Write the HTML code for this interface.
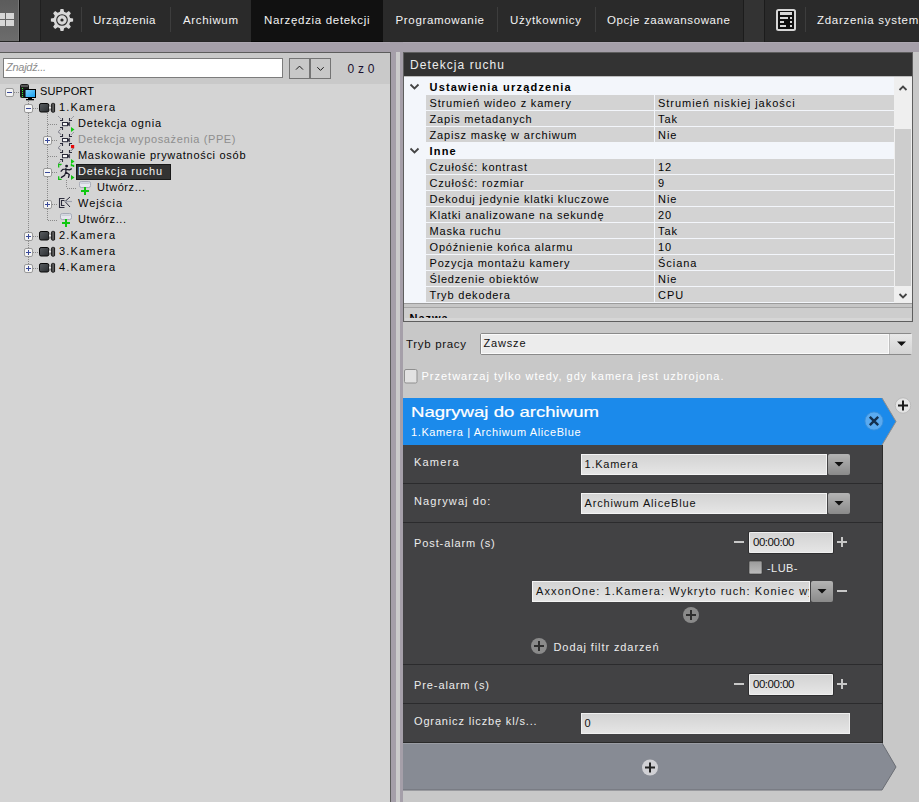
<!DOCTYPE html>
<html><head><meta charset="utf-8"><title>Detekcja ruchu</title>
<style>html,body{margin:0;padding:0;background:#c8c8c8;overflow:hidden}svg{display:block}text{font-family:"Liberation Sans", sans-serif}</style>
</head><body>
<svg width="919" height="802" viewBox="0 0 919 802" shape-rendering="auto">
<defs>
<linearGradient id="gWin" x1="0" y1="0" x2="0" y2="1"><stop offset="0" stop-color="#5c5c5c"/><stop offset="1" stop-color="#6c6c6c"/></linearGradient>
<linearGradient id="gCam" x1="0" y1="0" x2="1" y2="1"><stop offset="0" stop-color="#5a5e62"/><stop offset="1" stop-color="#2a2d30"/></linearGradient>
<linearGradient id="gNeck" x1="0" y1="0" x2="0" y2="1"><stop offset="0" stop-color="#888"/><stop offset="0.4" stop-color="#f0f0f0"/><stop offset="1" stop-color="#666"/></linearGradient>
<linearGradient id="gLens" x1="0" y1="0" x2="1" y2="0"><stop offset="0" stop-color="#222"/><stop offset="0.5" stop-color="#777"/><stop offset="1" stop-color="#111"/></linearGradient>
<linearGradient id="gScr" x1="0" y1="0" x2="1" y2="1"><stop offset="0" stop-color="#7fd4ff"/><stop offset="1" stop-color="#1aa0f0"/></linearGradient>
<linearGradient id="gField" x1="0" y1="0" x2="0" y2="1"><stop offset="0" stop-color="#d2d2d2"/><stop offset="1" stop-color="#e6e6e6"/></linearGradient>
<linearGradient id="gBtn" x1="0" y1="0" x2="0" y2="1"><stop offset="0" stop-color="#b4b4b4"/><stop offset="1" stop-color="#8a8a8a"/></linearGradient>
<linearGradient id="gBtnL" x1="0" y1="0" x2="0" y2="1"><stop offset="0" stop-color="#e8e8e8"/><stop offset="1" stop-color="#d4d4d4"/></linearGradient>
<linearGradient id="gChk" x1="0" y1="0" x2="0" y2="1"><stop offset="0" stop-color="#9a9a9a"/><stop offset="1" stop-color="#bcbcbc"/></linearGradient>
</defs>
<rect x="0" y="0" width="919" height="42" fill="#2a2a2a" />
<rect x="0" y="41" width="919" height="1" fill="#262626" />
<rect x="0" y="0" width="19" height="41" fill="url(#gWin)" />
<rect x="18" y="0" width="1" height="41" fill="#777" />
<rect x="19" y="0" width="1" height="42" fill="#0e0e0e" />
<rect x="20" y="0" width="20" height="41" fill="#333333" />
<rect x="40" y="0" width="1" height="41" fill="#1f1f1f" />
<rect x="0" y="13" width="5" height="6" fill="#d6d6d6" />
<rect x="6" y="13" width="8" height="6" fill="#d6d6d6" />
<rect x="0" y="20" width="5" height="6" fill="#d6d6d6" />
<rect x="6" y="20" width="8" height="6" fill="#d6d6d6" />
<polygon points="70.14,17.92 73.11,18.55 73.11,21.45 70.14,22.08 69.22,24.29 70.88,26.83 68.83,28.88 66.29,27.22 64.08,28.14 63.45,31.11 60.55,31.11 59.92,28.14 57.71,27.22 55.17,28.88 53.12,26.83 54.78,24.29 53.86,22.08 50.89,21.45 50.89,18.55 53.86,17.92 54.78,15.71 53.12,13.17 55.17,11.12 57.71,12.78 59.92,11.86 60.55,8.89 63.45,8.89 64.08,11.86 66.29,12.78 68.83,11.12 70.88,13.17 69.22,15.71" fill="#d8d8d8"/>
<circle cx="62" cy="20" r="5.3" fill="none" stroke="#2a2a2a" stroke-width="1.1"/>
<circle cx="62" cy="20" r="1.6" fill="#2a2a2a"/>
<rect x="81" y="7" width="1" height="25" fill="#3d3d3d" />
<rect x="170" y="7" width="1" height="25" fill="#3d3d3d" />
<rect x="497" y="7" width="1" height="25" fill="#3d3d3d" />
<rect x="595" y="7" width="1" height="25" fill="#3d3d3d" />
<rect x="805" y="7" width="1" height="25" fill="#3d3d3d" />
<rect x="251" y="0" width="132" height="42" fill="#111111" />
<rect x="251" y="41" width="132" height="1" fill="#070707" />
<rect x="743" y="0" width="1" height="42" fill="#1c1c1c" />
<rect x="744" y="0" width="20" height="42" fill="#333333" />
<rect x="764" y="0" width="1" height="42" fill="#1c1c1c" />
<text x="93" y="24" font-size="11.5" fill="#f2f2f2" textLength="62.5" lengthAdjust="spacing" >Urządzenia</text>
<text x="183" y="24" font-size="11.5" fill="#f2f2f2" textLength="55" lengthAdjust="spacing" >Archiwum</text>
<text x="264" y="24" font-size="11.5" fill="#f2f2f2" textLength="105.5" lengthAdjust="spacing" >Narzędzia detekcji</text>
<text x="395.5" y="24" font-size="11.5" fill="#f2f2f2" textLength="88.5" lengthAdjust="spacing" >Programowanie</text>
<text x="510" y="24" font-size="11.5" fill="#f2f2f2" textLength="71" lengthAdjust="spacing" >Użytkownicy</text>
<text x="607" y="24" font-size="11.5" fill="#f2f2f2" textLength="123" lengthAdjust="spacing" >Opcje zaawansowane</text>
<text x="817" y="24" font-size="11.5" fill="#f2f2f2" letter-spacing="0.7">Zdarzenia systemowe</text>
<rect x="777" y="10" width="18" height="20" rx="1.5" fill="#111" stroke="#d6d6d6" stroke-width="2"/>
<rect x="780" y="12" width="12" height="3" fill="#d8d8d8" />
<rect x="780" y="17" width="8" height="2" fill="#d8d8d8" />
<rect x="790" y="17" width="2" height="2" fill="#d8d8d8" />
<rect x="780" y="21" width="4" height="2" fill="#d8d8d8" />
<rect x="790" y="21" width="2" height="2" fill="#d8d8d8" />
<rect x="780" y="25" width="6" height="2" fill="#d8d8d8" />
<rect x="790" y="25" width="2" height="2" fill="#d8d8d8" />
<rect x="0" y="42" width="919" height="10" fill="#a59fa9" />
<rect x="0" y="42" width="919" height="1" fill="#ada7b1" />
<rect x="390" y="42" width="13" height="760" fill="#a59fa9" />
<rect x="396" y="52" width="4" height="750" fill="#cbcbcb" />
<rect x="0" y="52" width="390" height="750" fill="#d4d4d4" />
<rect x="0" y="52" width="391" height="1" fill="#5c5c5c" />
<rect x="390" y="52" width="1" height="750" fill="#5c5c5c" />
<rect x="0" y="53" width="390" height="31" fill="#c9c9c9" />
<rect x="3" y="58" width="280" height="20" fill="#7c7c7c" />
<rect x="4" y="59" width="278" height="18" fill="#ffffff" />
<text x="6" y="71" font-size="11" fill="#8c8c8c" textLength="40" lengthAdjust="spacing" font-style="italic" >Znajdź...</text>
<rect x="289" y="58" width="42" height="21" fill="#747474" />
<rect x="290" y="59" width="19" height="19" fill="#c8c8c8" />
<rect x="311" y="59" width="19" height="19" fill="#c8c8c8" />
<path d="M296 69.6 L299.5 66.1 L303 69.6" fill="none" stroke="#111" stroke-width="0.95"/>
<path d="M317.3 67.2 L320.5 70.4 L323.7 67.2" fill="none" stroke="#111" stroke-width="0.95"/>
<text x="347.5" y="73" font-size="12" fill="#1a1030" textLength="27" lengthAdjust="spacing" >0 z 0</text>
<line x1="28.5" y1="97" x2="28.5" y2="268" stroke="#8a8a8a" stroke-width="1" stroke-dasharray="1 1"/>
<line x1="47.5" y1="113" x2="47.5" y2="220" stroke="#8a8a8a" stroke-width="1" stroke-dasharray="1 1"/>
<line x1="66.5" y1="180" x2="66.5" y2="188" stroke="#8a8a8a" stroke-width="1" stroke-dasharray="1 1"/>
<line x1="14" y1="92.5" x2="20" y2="92.5" stroke="#8a8a8a" stroke-width="1" stroke-dasharray="1 1"/>
<line x1="33" y1="108.5" x2="39" y2="108.5" stroke="#8a8a8a" stroke-width="1" stroke-dasharray="1 1"/>
<line x1="33" y1="236.5" x2="39" y2="236.5" stroke="#8a8a8a" stroke-width="1" stroke-dasharray="1 1"/>
<line x1="33" y1="252.5" x2="39" y2="252.5" stroke="#8a8a8a" stroke-width="1" stroke-dasharray="1 1"/>
<line x1="33" y1="268.5" x2="39" y2="268.5" stroke="#8a8a8a" stroke-width="1" stroke-dasharray="1 1"/>
<line x1="48" y1="124.5" x2="57" y2="124.5" stroke="#8a8a8a" stroke-width="1" stroke-dasharray="1 1"/>
<line x1="48" y1="156.5" x2="57" y2="156.5" stroke="#8a8a8a" stroke-width="1" stroke-dasharray="1 1"/>
<line x1="48" y1="220.5" x2="57" y2="220.5" stroke="#8a8a8a" stroke-width="1" stroke-dasharray="1 1"/>
<line x1="52" y1="140.5" x2="57" y2="140.5" stroke="#8a8a8a" stroke-width="1" stroke-dasharray="1 1"/>
<line x1="52" y1="172.5" x2="57" y2="172.5" stroke="#8a8a8a" stroke-width="1" stroke-dasharray="1 1"/>
<line x1="52" y1="204.5" x2="57" y2="204.5" stroke="#8a8a8a" stroke-width="1" stroke-dasharray="1 1"/>
<line x1="67" y1="188.5" x2="76" y2="188.5" stroke="#8a8a8a" stroke-width="1" stroke-dasharray="1 1"/>
<rect x="5.5" y="88.5" width="8" height="8" rx="1.5" fill="#f4f4f4" stroke="#9a9a9a" stroke-width="1"/>
<rect x="7" y="92" width="5" height="1" fill="#3a4a9a"/>
<rect x="24.5" y="104.5" width="8" height="8" rx="1.5" fill="#f4f4f4" stroke="#9a9a9a" stroke-width="1"/>
<rect x="26" y="108" width="5" height="1" fill="#3a4a9a"/>
<rect x="43.5" y="136.5" width="8" height="8" rx="1.5" fill="#f4f4f4" stroke="#9a9a9a" stroke-width="1"/>
<rect x="45" y="140" width="5" height="1" fill="#3a4a9a"/>
<rect x="47" y="138" width="1" height="5" fill="#3a4a9a"/>
<rect x="43.5" y="168.5" width="8" height="8" rx="1.5" fill="#f4f4f4" stroke="#9a9a9a" stroke-width="1"/>
<rect x="45" y="172" width="5" height="1" fill="#3a4a9a"/>
<rect x="43.5" y="200.5" width="8" height="8" rx="1.5" fill="#f4f4f4" stroke="#9a9a9a" stroke-width="1"/>
<rect x="45" y="204" width="5" height="1" fill="#3a4a9a"/>
<rect x="47" y="202" width="1" height="5" fill="#3a4a9a"/>
<rect x="24.5" y="232.5" width="8" height="8" rx="1.5" fill="#f4f4f4" stroke="#9a9a9a" stroke-width="1"/>
<rect x="26" y="236" width="5" height="1" fill="#3a4a9a"/>
<rect x="28" y="234" width="1" height="5" fill="#3a4a9a"/>
<rect x="24.5" y="248.5" width="8" height="8" rx="1.5" fill="#f4f4f4" stroke="#9a9a9a" stroke-width="1"/>
<rect x="26" y="252" width="5" height="1" fill="#3a4a9a"/>
<rect x="28" y="250" width="1" height="5" fill="#3a4a9a"/>
<rect x="24.5" y="264.5" width="8" height="8" rx="1.5" fill="#f4f4f4" stroke="#9a9a9a" stroke-width="1"/>
<rect x="26" y="268" width="5" height="1" fill="#3a4a9a"/>
<rect x="28" y="266" width="1" height="5" fill="#3a4a9a"/>
<rect x="20" y="84" width="9" height="14" rx="2" fill="#1a1a1a"/>
<rect x="21" y="85" width="7" height="2" fill="#555" />
<rect x="22" y="88" width="1" height="1" fill="#30f030" />
<rect x="22" y="90" width="1" height="1" fill="#30f030" />
<rect x="22" y="92" width="1" height="1" fill="#30f030" />
<rect x="22" y="94" width="1" height="1" fill="#30f030" />
<rect x="22" y="96" width="1" height="1" fill="#30f030" />
<rect x="24.5" y="89" width="11.5" height="9" fill="#000"/>
<rect x="25.5" y="90" width="9.5" height="7" fill="url(#gScr)"/>
<rect x="28" y="98" width="4" height="1.2" fill="#000" />
<rect x="26" y="99" width="8" height="1.3" fill="#000" />
<rect x="39.5" y="103.5" width="9.3" height="8.5" rx="1.6" fill="url(#gCam)" stroke="#080808" stroke-width="1"/>
<rect x="49" y="105.7" width="2.8" height="4.6" fill="url(#gNeck)"/>
<rect x="51.6" y="103.4" width="3" height="8.8" rx="0.8" fill="url(#gLens)" stroke="#050505" stroke-width="0.8"/>
<path d="M58.5 116.5 L61 119 M73.5 116.5 L71 119" stroke="#4a4a5c" stroke-width="0.9" stroke-dasharray="1 0.8" fill="none"/>
<path d="M60 120.5 H62.5 V118  M72 120.5 H69.5 V118" stroke="#2c2c3c" stroke-width="1.1" fill="none"/>
<rect x="62.5" y="122.5" width="5" height="3.2" fill="#f6f6f6" stroke="#2c2c3c" stroke-width="1"/>
<path d="M67.5 123.7 L69.6 122 V126 L67.5 124.6 Z" fill="#2c2c3c" stroke="#2c2c3c" stroke-width="0.5"/>
<path d="M60 127.5 H62.5 V130" stroke="#2c2c3c" stroke-width="1.1" fill="none"/>
<path d="M61 128.8 L58.5 131.5 L61 134" stroke="#4a4a5c" stroke-width="0.9" stroke-dasharray="1 0.8" fill="none"/>
<path d="M71 127 L74.5 129.5 L71 132 Z" fill="#10c810"/>
<path d="M58.5 132.5 L61 135 M73.5 132.5 L71 135" stroke="#4a4a5c" stroke-width="0.9" stroke-dasharray="1 0.8" fill="none"/>
<path d="M60 136.5 H62.5 V134  M72 136.5 H69.5 V134" stroke="#2c2c3c" stroke-width="1.1" fill="none"/>
<rect x="62.5" y="138.5" width="5" height="3.2" fill="#f6f6f6" stroke="#2c2c3c" stroke-width="1"/>
<path d="M67.5 139.7 L69.6 138 V142 L67.5 140.6 Z" fill="#2c2c3c" stroke="#2c2c3c" stroke-width="0.5"/>
<path d="M60 143.5 H62.5 V146" stroke="#2c2c3c" stroke-width="1.1" fill="none"/>
<path d="M61 144.8 L58.5 147.5 L61 150" stroke="#4a4a5c" stroke-width="0.9" stroke-dasharray="1 0.8" fill="none"/>
<path d="M72 143.5 H69.5 V146" stroke="#2c2c3c" stroke-width="1.1" fill="none"/>
<rect x="71" y="145" width="3.2" height="3.2" fill="#e80808" />
<path d="M73 148.5 L71 150.5" stroke="#4a4a5c" stroke-width="0.9" stroke-dasharray="1 0.8"/>
<path d="M58.5 148.5 L61 151 M73.5 148.5 L71 151" stroke="#4a4a5c" stroke-width="0.9" stroke-dasharray="1 0.8" fill="none"/>
<path d="M60 152.5 H62.5 V150  M72 152.5 H69.5 V150" stroke="#2c2c3c" stroke-width="1.1" fill="none"/>
<rect x="62.5" y="154.5" width="5" height="3.2" fill="#f6f6f6" stroke="#2c2c3c" stroke-width="1"/>
<path d="M67.5 155.7 L69.6 154 V158 L67.5 156.6 Z" fill="#2c2c3c" stroke="#2c2c3c" stroke-width="0.5"/>
<path d="M60 159.5 H62.5 V162" stroke="#2c2c3c" stroke-width="1.1" fill="none"/>
<path d="M61 160.8 L58.5 163.5 L61 166" stroke="#4a4a5c" stroke-width="0.9" stroke-dasharray="1 0.8" fill="none"/>
<path d="M71 159 L74.5 161.5 L71 164 Z" fill="#10c810"/>
<path d="M71.5 164 V165.5 H73.5 V167" stroke="#10c810" stroke-width="1.4" fill="none"/>
<path d="M58.7 167.5 V164.4 H61.6" stroke="#10c010" stroke-width="1.3" fill="none"/>
<path d="M58.7 176.3 V179.3 H61.6" stroke="#10c010" stroke-width="1.3" fill="none"/>
<path d="M71 175 L74.5 177.5 L71 180 Z" fill="#10c010"/>
<circle cx="66.6" cy="166.1" r="1.45" fill="#1a1a28"/>
<path d="M65.9 168.4 L65.9 172.2 M65.6 169 L62.8 169.4 L61.1 171.2 M66.3 169.3 L69.5 169.9 L71.4 168.9 M65.8 172.2 L64.6 175.4 L61.4 177.4 M66.1 172.3 L69.3 174.5 L68.5 177.4" stroke="#1a1a28" stroke-width="1.25" fill="none" stroke-linecap="round" stroke-linejoin="round"/>
<rect x="79.5" y="181.5" width="11" height="6" rx="1.8" fill="#e6e8ee" stroke="#a6aab6" stroke-width="1"/>
<rect x="80.5" y="182.5" width="9" height="1.3" fill="#c4c8d2" />
<rect x="81" y="190" width="8" height="2" fill="#10c810" />
<rect x="84" y="187" width="2" height="8" fill="#10c810" />
<path d="M64.5 198.5 H59.5 V207.5 H64.5 M64.5 200.5 H61.5 V205.5 H64.5" stroke="#2c2c3c" stroke-width="1.1" fill="none"/>
<path d="M70 197 L65 201.5 L70 207" stroke="#2c2c3c" stroke-width="1" fill="none"/>
<path d="M65 201.5 H72" stroke="#a0a4b0" stroke-width="1.2"/>
<rect x="60.5" y="213.5" width="11" height="6" rx="1.8" fill="#e6e8ee" stroke="#a6aab6" stroke-width="1"/>
<rect x="61.5" y="214.5" width="9" height="1.3" fill="#c4c8d2" />
<rect x="62" y="222" width="8" height="2" fill="#10c810" />
<rect x="65" y="219" width="2" height="8" fill="#10c810" />
<rect x="39.5" y="231.5" width="9.3" height="8.5" rx="1.6" fill="url(#gCam)" stroke="#080808" stroke-width="1"/>
<rect x="49" y="233.7" width="2.8" height="4.6" fill="url(#gNeck)"/>
<rect x="51.6" y="231.4" width="3" height="8.8" rx="0.8" fill="url(#gLens)" stroke="#050505" stroke-width="0.8"/>
<rect x="39.5" y="247.5" width="9.3" height="8.5" rx="1.6" fill="url(#gCam)" stroke="#080808" stroke-width="1"/>
<rect x="49" y="249.7" width="2.8" height="4.6" fill="url(#gNeck)"/>
<rect x="51.6" y="247.4" width="3" height="8.8" rx="0.8" fill="url(#gLens)" stroke="#050505" stroke-width="0.8"/>
<rect x="39.5" y="263.5" width="9.3" height="8.5" rx="1.6" fill="url(#gCam)" stroke="#080808" stroke-width="1"/>
<rect x="49" y="265.7" width="2.8" height="4.6" fill="url(#gNeck)"/>
<rect x="51.6" y="263.4" width="3" height="8.8" rx="0.8" fill="url(#gLens)" stroke="#050505" stroke-width="0.8"/>
<text x="40" y="95" font-size="11" fill="#050505" textLength="54" lengthAdjust="spacing" >SUPPORT</text>
<text x="59" y="111" font-size="11" fill="#050505" textLength="56" lengthAdjust="spacing" >1.Kamera</text>
<text x="78" y="127" font-size="11" fill="#050505" textLength="83" lengthAdjust="spacing" >Detekcja ognia</text>
<text x="78" y="143" font-size="11" fill="#8e8e8e" textLength="157.5" lengthAdjust="spacing" >Detekcja wyposażenia (PPE)</text>
<text x="78" y="159" font-size="11" fill="#050505" textLength="167.5" lengthAdjust="spacing" >Maskowanie prywatności osób</text>
<rect x="76" y="164" width="95" height="16" fill="#333333" />
<rect x="76.5" y="164.5" width="94" height="15" fill="none" stroke="#000" stroke-width="1" stroke-dasharray="1 1"/>
<text x="78" y="175" font-size="11" fill="#f4f4f4" textLength="84" lengthAdjust="spacing" >Detekcja ruchu</text>
<text x="97" y="191" font-size="11" fill="#050505" textLength="48" lengthAdjust="spacing" >Utwórz...</text>
<text x="78" y="207" font-size="11" fill="#050505" textLength="44" lengthAdjust="spacing" >Wejścia</text>
<text x="78" y="223" font-size="11" fill="#050505" textLength="48" lengthAdjust="spacing" >Utwórz...</text>
<text x="59" y="239" font-size="11" fill="#050505" textLength="56" lengthAdjust="spacing" >2.Kamera</text>
<text x="59" y="255" font-size="11" fill="#050505" textLength="56" lengthAdjust="spacing" >3.Kamera</text>
<text x="59" y="271" font-size="11" fill="#050505" textLength="56" lengthAdjust="spacing" >4.Kamera</text>
<rect x="403" y="52" width="516" height="750" fill="#c8c8c8" />
<rect x="403" y="52" width="510" height="270" fill="#5e5e5e" />
<rect x="404" y="53" width="508" height="23" fill="#333333" />
<text x="410" y="69" font-size="12" fill="#ececec" textLength="94" lengthAdjust="spacing" >Detekcja ruchu</text>
<rect x="404" y="76" width="508" height="1" fill="#bdbdbd" />
<rect x="404" y="77" width="490" height="226" fill="#f3f6fb" />
<rect x="894" y="77" width="18" height="226" fill="#efefef" />
<rect x="895" y="129" width="16" height="157" fill="#cdcdcd" />
<path d="M899.5 90 L903 86.5 L906.5 90" stroke="#444" stroke-width="1.8" fill="none"/>
<path d="M899.5 294 L903 297.5 L906.5 294" stroke="#444" stroke-width="1.8" fill="none"/>
<path d="M410.5 84.5 L414.5 88.5 L418.5 84.5" stroke="#444" stroke-width="1.8" fill="none"/>
<text x="429.5" y="91" font-size="11" fill="#000" font-weight="bold" letter-spacing="1.19">Ustawienia urządzenia</text>
<rect x="426" y="95" width="228" height="15" fill="#d3d3d3" />
<rect x="655" y="95" width="239" height="15" fill="#d3d3d3" />
<text x="429.5" y="107" font-size="11" fill="#050505" letter-spacing="0.82">Strumień wideo z kamery</text>
<text x="658" y="107" font-size="11" fill="#050505" letter-spacing="0.97">Strumień niskiej jakości</text>
<rect x="426" y="111" width="228" height="15" fill="#d3d3d3" />
<rect x="655" y="111" width="239" height="15" fill="#d3d3d3" />
<text x="429.5" y="123" font-size="11" fill="#050505" letter-spacing="0.82">Zapis metadanych</text>
<text x="658" y="123" font-size="11" fill="#050505" letter-spacing="0.97">Tak</text>
<rect x="426" y="127" width="228" height="15" fill="#d3d3d3" />
<rect x="655" y="127" width="239" height="15" fill="#d3d3d3" />
<text x="429.5" y="139" font-size="11" fill="#050505" letter-spacing="0.82">Zapisz maskę w archiwum</text>
<text x="658" y="139" font-size="11" fill="#050505" letter-spacing="0.97">Nie</text>
<path d="M410.5 148.5 L414.5 152.5 L418.5 148.5" stroke="#444" stroke-width="1.8" fill="none"/>
<text x="429.5" y="155" font-size="11" fill="#000" font-weight="bold" letter-spacing="1.19">Inne</text>
<rect x="426" y="159" width="228" height="15" fill="#d3d3d3" />
<rect x="655" y="159" width="239" height="15" fill="#d3d3d3" />
<text x="429.5" y="171" font-size="11" fill="#050505" letter-spacing="0.82">Czułość: kontrast</text>
<text x="658" y="171" font-size="11" fill="#050505" letter-spacing="0.97">12</text>
<rect x="426" y="175" width="228" height="15" fill="#d3d3d3" />
<rect x="655" y="175" width="239" height="15" fill="#d3d3d3" />
<text x="429.5" y="187" font-size="11" fill="#050505" letter-spacing="0.82">Czułość: rozmiar</text>
<text x="658" y="187" font-size="11" fill="#050505" letter-spacing="0.97">9</text>
<rect x="426" y="191" width="228" height="15" fill="#d3d3d3" />
<rect x="655" y="191" width="239" height="15" fill="#d3d3d3" />
<text x="429.5" y="203" font-size="11" fill="#050505" letter-spacing="0.82">Dekoduj jedynie klatki kluczowe</text>
<text x="658" y="203" font-size="11" fill="#050505" letter-spacing="0.97">Nie</text>
<rect x="426" y="207" width="228" height="15" fill="#d3d3d3" />
<rect x="655" y="207" width="239" height="15" fill="#d3d3d3" />
<text x="429.5" y="219" font-size="11" fill="#050505" letter-spacing="0.82">Klatki analizowane na sekundę</text>
<text x="658" y="219" font-size="11" fill="#050505" letter-spacing="0.97">20</text>
<rect x="426" y="223" width="228" height="15" fill="#d3d3d3" />
<rect x="655" y="223" width="239" height="15" fill="#d3d3d3" />
<text x="429.5" y="235" font-size="11" fill="#050505" letter-spacing="0.82">Maska ruchu</text>
<text x="658" y="235" font-size="11" fill="#050505" letter-spacing="0.97">Tak</text>
<rect x="426" y="239" width="228" height="15" fill="#d3d3d3" />
<rect x="655" y="239" width="239" height="15" fill="#d3d3d3" />
<text x="429.5" y="251" font-size="11" fill="#050505" letter-spacing="0.82">Opóźnienie końca alarmu</text>
<text x="658" y="251" font-size="11" fill="#050505" letter-spacing="0.97">10</text>
<rect x="426" y="255" width="228" height="15" fill="#d3d3d3" />
<rect x="655" y="255" width="239" height="15" fill="#d3d3d3" />
<text x="429.5" y="267" font-size="11" fill="#050505" letter-spacing="0.82">Pozycja montażu kamery</text>
<text x="658" y="267" font-size="11" fill="#050505" letter-spacing="0.97">Ściana</text>
<rect x="426" y="271" width="228" height="15" fill="#d3d3d3" />
<rect x="655" y="271" width="239" height="15" fill="#d3d3d3" />
<text x="429.5" y="283" font-size="11" fill="#050505" letter-spacing="0.82">Śledzenie obiektów</text>
<text x="658" y="283" font-size="11" fill="#050505" letter-spacing="0.97">Nie</text>
<rect x="426" y="287" width="228" height="15" fill="#d3d3d3" />
<rect x="655" y="287" width="239" height="15" fill="#d3d3d3" />
<text x="429.5" y="299" font-size="11" fill="#050505" letter-spacing="0.82">Tryb dekodera</text>
<text x="658" y="299" font-size="11" fill="#050505" letter-spacing="0.97">CPU</text>
<rect x="404" y="303" width="508" height="1" fill="#9c9c9c" />
<rect x="404" y="304" width="508" height="3" fill="#c6c6c6" />
<rect x="404" y="307" width="508" height="1" fill="#a6a6a6" />
<rect x="404" y="308" width="508" height="13" fill="#cdcdcd" />
<rect x="405" y="318" width="506" height="3" fill="#d6d6d6" />
<svg x="404" y="308" width="508" height="10"><text x="5.5" y="13.6" font-size="11" font-weight="bold" fill="#000" letter-spacing="1">Nazwa</text></svg>
<text x="406" y="348" font-size="11.5" fill="#111" textLength="60" lengthAdjust="spacing" >Tryb pracy</text>
<rect x="480.5" y="333.5" width="431" height="21" rx="1.5" fill="#c8c8c8" stroke="#8a8a8a"/>
<rect x="481" y="334" width="408" height="20" fill="#ececec" />
<rect x="889" y="334" width="1" height="20" fill="#bdbdbd" />
<rect x="890" y="334" width="22" height="20" fill="url(#gBtnL)"/>
<path d="M897 341.5 h9 l-4.5 4.5 z" fill="#111"/>
<rect x="481.5" y="334.5" width="407" height="19" fill="none" stroke="#fafafa" stroke-width="1"/>
<text x="483.5" y="347" font-size="11" fill="#111" textLength="42" lengthAdjust="spacing" >Zawsze</text>
<rect x="404.5" y="369.5" width="12.5" height="13.5" rx="1.5" fill="#e2e2e2" stroke="#8f8f8f"/>
<text x="421.5" y="380" font-size="11" fill="#ffffff" textLength="302" lengthAdjust="spacing" >Przetwarzaj tylko wtedy, gdy kamera jest uzbrojona.</text>
<path d="M403 398 H882 L896 421.5 L882 445 H403 Z" fill="#1b8aeb"/>
<path d="M882 398 L896 421.5 L882 445" stroke="#8d8d8d" stroke-width="1" fill="none"/>
<text x="411" y="417" font-size="15" fill="#ffffff" textLength="188" lengthAdjust="spacingAndGlyphs" stroke="#ffffff" stroke-width="0.2">Nagrywaj do archiwum</text>
<text x="411" y="436.3" font-size="11" fill="#ffffff" textLength="169.5" lengthAdjust="spacing" >1.Kamera | Archiwum AliceBlue</text>
<circle cx="874" cy="421" r="9" fill="#5aaaf0" stroke="#3d8fd8" stroke-width="0.8"/>
<path d="M869.8 416.8 L878.2 425.2 M878.2 416.8 L869.8 425.2" stroke="#14304e" stroke-width="2.4"/>
<circle cx="903" cy="405.5" r="7.7" fill="#e4e4e4" stroke="#b4b4b4" stroke-width="0.8"/>
<path d="M898 405.5 h10 M903 400.5 v10" stroke="#1a1a1a" stroke-width="2"/>
<rect x="403" y="445" width="479" height="298" fill="#424244" />
<rect x="882" y="445" width="1" height="298" fill="#2c2c2c" />
<rect x="403" y="483" width="479" height="1" fill="#2b2b2d" />
<rect x="403" y="522" width="479" height="1" fill="#2b2b2d" />
<rect x="403" y="664" width="479" height="1" fill="#2b2b2d" />
<rect x="403" y="703" width="479" height="1" fill="#2b2b2d" />
<rect x="403" y="742" width="480" height="1" fill="#2a2a2a" />
<rect x="581" y="454" width="246" height="21" rx="1" fill="url(#gField)" stroke="#2a2a2a" stroke-width="0"/>
<rect x="581.5" y="454.5" width="245" height="20" fill="none" stroke="#f4f4f4" stroke-width="1"/>
<rect x="828" y="454" width="22" height="21" rx="2" fill="url(#gBtn)"/>
<path d="M834.5 462.0 h9 l-4.5 4.5 z" fill="#111"/>
<text x="584.5" y="468" font-size="11" fill="#111" textLength="53" lengthAdjust="spacing" >1.Kamera</text>
<rect x="581" y="493" width="246" height="21" rx="1" fill="url(#gField)" stroke="#2a2a2a" stroke-width="0"/>
<rect x="581.5" y="493.5" width="245" height="20" fill="none" stroke="#f4f4f4" stroke-width="1"/>
<rect x="828" y="493" width="22" height="21" rx="2" fill="url(#gBtn)"/>
<path d="M834.5 501.0 h9 l-4.5 4.5 z" fill="#111"/>
<text x="584.5" y="507" font-size="11" fill="#111" letter-spacing="0.85">Archiwum AliceBlue</text>
<text x="414" y="466" font-size="11" fill="#ececec" textLength="44.5" lengthAdjust="spacing" >Kamera</text>
<text x="414" y="505" font-size="11" fill="#ececec" letter-spacing="1.1">Nagrywaj do:</text>
<text x="414" y="547" font-size="11" fill="#ececec" letter-spacing="0.9">Post-alarm (s)</text>
<text x="414" y="689" font-size="11" fill="#ececec" letter-spacing="0.9">Pre-alarm (s)</text>
<text x="414" y="725" font-size="11" fill="#ececec" letter-spacing="0.85">Ogranicz liczbę kl/s...</text>
<rect x="748.5" y="531.5" width="85" height="22" rx="1.5" fill="none" stroke="#2e2e30" stroke-width="1"/>
<rect x="749" y="532" width="84" height="21" rx="1" fill="url(#gField)"/>
<rect x="749.5" y="532.5" width="83" height="20" rx="1" fill="none" stroke="#f0f0f0" stroke-width="1"/>
<text x="753" y="546.3" font-size="11.5" fill="#111" textLength="41.5" lengthAdjust="spacing" >00:00:00</text>
<rect x="734" y="541" width="10" height="2" fill="#c8c8c8" />
<rect x="837" y="541" width="10" height="2" fill="#c8c8c8" />
<rect x="841" y="537" width="2" height="10" fill="#c8c8c8" />
<rect x="749" y="561" width="13" height="13" rx="1" fill="url(#gChk)" stroke="#333" stroke-width="0.6"/>
<text x="767" y="571.5" font-size="11" fill="#ececec" textLength="30.5" lengthAdjust="spacing" >-LUB-</text>
<rect x="532" y="581" width="278" height="21" rx="1" fill="url(#gField)" stroke="#2a2a2a" stroke-width="0"/>
<rect x="532.5" y="581.5" width="277" height="20" fill="none" stroke="#f4f4f4" stroke-width="1"/>
<rect x="811" y="581" width="22" height="21" rx="2" fill="url(#gBtn)"/>
<path d="M817.5 589.0 h9 l-4.5 4.5 z" fill="#111"/>
<svg x="532" y="581" width="277" height="21"><text x="4" y="14" font-size="11" fill="#111" letter-spacing="1.1">AxxonOne: 1.Kamera: Wykryto ruch: Koniec wykrywania</text></svg>
<rect x="837" y="590" width="10" height="2" fill="#c8c8c8" />
<circle cx="691" cy="615" r="8" fill="#8a8a8a"/>
<path d="M686 615 h10 M691 610 v10" stroke="#2e2e2e" stroke-width="2"/>
<circle cx="539" cy="646" r="8" fill="#8a8a8a"/>
<path d="M534 646 h10 M539 641 v10" stroke="#2e2e2e" stroke-width="2"/>
<text x="553.5" y="651" font-size="11" fill="#ececec" textLength="105" lengthAdjust="spacing" >Dodaj filtr zdarzeń</text>
<rect x="748.5" y="673.5" width="85" height="22" rx="1.5" fill="none" stroke="#2e2e30" stroke-width="1"/>
<rect x="749" y="674" width="84" height="21" rx="1" fill="url(#gField)"/>
<rect x="749.5" y="674.5" width="83" height="20" rx="1" fill="none" stroke="#f0f0f0" stroke-width="1"/>
<text x="753" y="688.3" font-size="11.5" fill="#111" textLength="41.5" lengthAdjust="spacing" >00:00:00</text>
<rect x="734" y="683" width="10" height="2" fill="#c8c8c8" />
<rect x="837" y="683" width="10" height="2" fill="#c8c8c8" />
<rect x="841" y="679" width="2" height="10" fill="#c8c8c8" />
<rect x="581" y="713" width="269" height="21" fill="url(#gField)"/>
<rect x="581.5" y="713.5" width="268" height="20" fill="none" stroke="#f0f0f0" stroke-width="1"/>
<text x="584.5" y="727" font-size="11" fill="#111" >0</text>
<path d="M403 743 H882 L896 767 L882 790 H403 Z" fill="#878b94"/>
<path d="M882 743 L896 767 L882 790 H403" stroke="#6a6d74" stroke-width="1" fill="none"/>
<rect x="403" y="743" width="479" height="1" fill="#9a9da4" />
<circle cx="650" cy="767.5" r="8" fill="#d0d0d4"/>
<path d="M645 767.5 h10 M650 762.5 v10" stroke="#222" stroke-width="2"/>
</svg>
</body></html>
